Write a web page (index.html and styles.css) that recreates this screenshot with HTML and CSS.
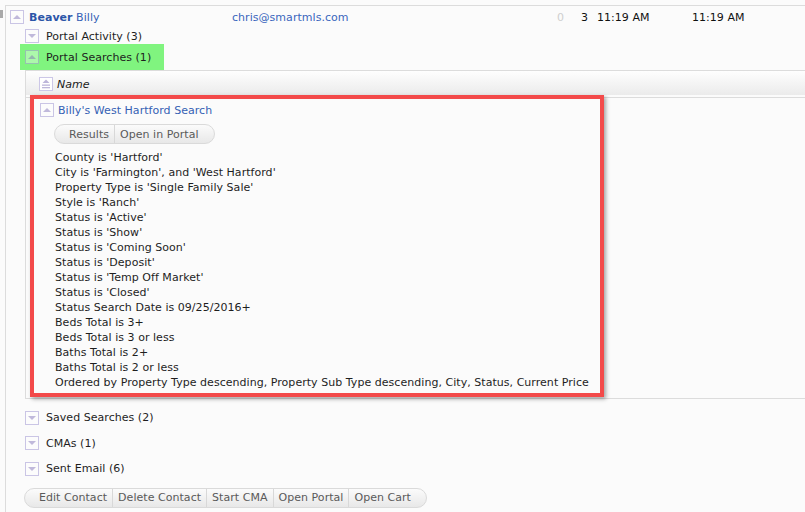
FILE: index.html
```html
<!DOCTYPE html>
<html>
<head>
<meta charset="utf-8">
<link rel="stylesheet" href="styles.css">
</head>
<body>
<div class="page">
  <div class="edge"><span class="nub"></span></div>
  <div class="contact">
    <div class="head">
      <span class="tog up"></span>
      <span class="name"><b>Beaver</b> Billy</span>
      <span class="email">chris@smartmls.com</span>
      <span class="num zero">0</span>
      <span class="num">3</span>
      <span class="time">11:19 AM</span>
      <span class="time">11:19 AM</span>
    </div>
    <div class="sections">
      <div class="sec sec-activity"><span class="tog down"></span><span>Portal Activity (3)</span></div>
      <div class="sec sec-hl"><span class="tog up"></span><span>Portal Searches (1)</span></div>
      <div class="panel">
        <div class="panel-head">
          <span class="tog sort"><svg width="12" height="12" viewBox="0 0 12 12"><path d="M2.5 5 L6 1.5 L9.5 5 Z" fill="#bdb6da"/><rect x="2" y="6.5" width="8" height="1.3" fill="#bdb6da"/><rect x="2" y="9" width="8" height="1.3" fill="#bdb6da"/></svg></span>
          <i class="col-name">Name</i>
        </div>
        <div class="panel-body">
          <div class="search">
            <div class="search-title"><span class="tog up"></span><span class="link">Billy's West Hartford Search</span></div>
            <div class="pill search-btns"><span>Results</span><span>Open in Portal</span></div>
            <ul class="crit">
              <li>County is 'Hartford'</li>
              <li>City is 'Farmington', and 'West Hartford'</li>
              <li>Property Type is 'Single Family Sale'</li>
              <li>Style is 'Ranch'</li>
              <li>Status is 'Active'</li>
              <li>Status is 'Show'</li>
              <li>Status is 'Coming Soon'</li>
              <li>Status is 'Deposit'</li>
              <li>Status is 'Temp Off Market'</li>
              <li>Status is 'Closed'</li>
              <li>Status Search Date is 09/25/2016+</li>
              <li>Beds Total is 3+</li>
              <li>Beds Total is 3 or less</li>
              <li>Baths Total is 2+</li>
              <li>Baths Total is 2 or less</li>
              <li>Ordered by Property Type descending, Property Sub Type descending, City, Status, Current Price</li>
            </ul>
          </div>
        </div>
      </div>
      <div class="lower">
        <div class="sec row"><span class="tog down"></span><span>Saved Searches (2)</span></div>
        <div class="sec row"><span class="tog down"></span><span>CMAs (1)</span></div>
        <div class="sec row"><span class="tog down"></span><span>Sent Email (6)</span></div>
      </div>
      <div class="pill actions"><span>Edit Contact</span><span>Delete Contact</span><span>Start CMA</span><span>Open Portal</span><span>Open Cart</span></div>
    </div>
  </div>
</div>
</body>
</html>
```
FILE: styles.css
```css
html, body {
  margin: 0;
  padding: 0;
  background: #fbfbfb;
}
body {
  font-family: "DejaVu Sans", sans-serif;
  font-size: 11px;
  letter-spacing: 0.04px;
  color: #1e1e1e;
  width: 805px;
  height: 512px;
  overflow: hidden;
}
.page {
  display: flex;
  padding-top: 5px;
}
.edge {
  width: 5px;
  flex: none;
}
.nub {
  display: block;
  width: 3px;
  height: 8px;
  margin-top: 5px;
  background: #a9a9a9;
}
.contact {
  flex: 1;
  border-top: 1px solid #dcdcdc;
  border-left: 1px solid #dcdcdc;
  height: 520px;
}
.head {
  display: flex;
  align-items: center;
  height: 22px;
  padding-left: 4px;
  white-space: nowrap;
}
.name {
  width: 203px;
  margin-left: 5px;
  color: #3560b5;
}
.name b {
  color: #2b55a8;
}
.email {
  width: 325px;
  color: #3a66bd;
}
.num {
  width: 16px;
  color: #111;
}
.num.zero {
  width: 24px;
  color: #cfcfcf;
}
.time {
  width: 95px;
  color: #111;
}
.tog {
  position: relative;
  flex: none;
  display: inline-flex;
  align-items: center;
  justify-content: center;
  width: 12px;
  height: 12px;
  border: 1px solid rgba(110, 95, 185, 0.35);
  background: rgba(255, 255, 255, 0.35);
}
.tog.up::after,
.tog.down::after {
  content: "";
  width: 0;
  height: 0;
  border-left: 4px solid transparent;
  border-right: 4px solid transparent;
}
.tog.up::after {
  border-bottom: 4px solid rgba(120, 105, 180, 0.45);
  margin-top: -1px;
}
.tog.down::after {
  border-top: 4px solid rgba(120, 105, 180, 0.45);
  margin-top: 0px;
}
.sections {
  padding-left: 19px;
}
.sec {
  display: flex;
  align-items: center;
  gap: 7px;
  white-space: nowrap;
}
.sec-activity {
  height: 16px;
}
.sec-hl {
  margin-left: -5px;
  padding-left: 5px;
  width: 139px;
  height: 26px;
  background: #80f47f;
}
.panel {
  border-top: 1px solid #dcdcdc;
  border-left: 1px solid #dcdcdc;
  border-bottom: 1px solid #dcdcdc;
}
.panel-head {
  display: flex;
  align-items: center;
  gap: 4px;
  height: 26px;
  padding-left: 13px;
  background: linear-gradient(#fefefe, #ebebeb 92%, #fbfbfb 92%);
}
.tog.sort {
  background: #fff;
}
.col-name {
  color: #1a1a1a;
}
.panel-body {
  border-top: 1px solid #dcdcdc;
  padding: 0 0 1px 4px;
}
.search {
  width: 560px;
  margin-top: -3px;
  border: 4px solid #f34a4a;
  box-shadow: 2px 2px 4px rgba(0, 0, 0, 0.35);
  padding: 4px 0 3px 6px;
  background: #fbfbfb;
}
.search-title {
  display: flex;
  align-items: center;
  gap: 4px;
  height: 14px;
}
.link {
  color: #3561b4;
}
.pill {
  display: inline-flex;
  align-items: stretch;
  height: 18px;
  border: 1px solid #dadada;
  border-radius: 10px;
  background: linear-gradient(#fbfbfb, #e8e8e8);
  color: #5a5a5a;
  white-space: nowrap;
}
.pill span {
  display: flex;
  align-items: center;
  padding: 0 5px;
  border-left: 1px solid #d8d8d8;
}
.pill span:first-child {
  border-left: none;
  padding-left: 14px;
}
.pill span:last-child {
  padding-right: 15px;
}
.search-btns {
  margin: 7px 0 0 14px;
}
.crit {
  list-style: none;
  margin: 6px 0 0 15px;
  padding: 0;
  line-height: 15px;
}
.lower {
  margin-top: 6px;
}
.row {
  height: 25.5px;
}
.actions {
  margin: 6px 0 0 -1px;
}
```
